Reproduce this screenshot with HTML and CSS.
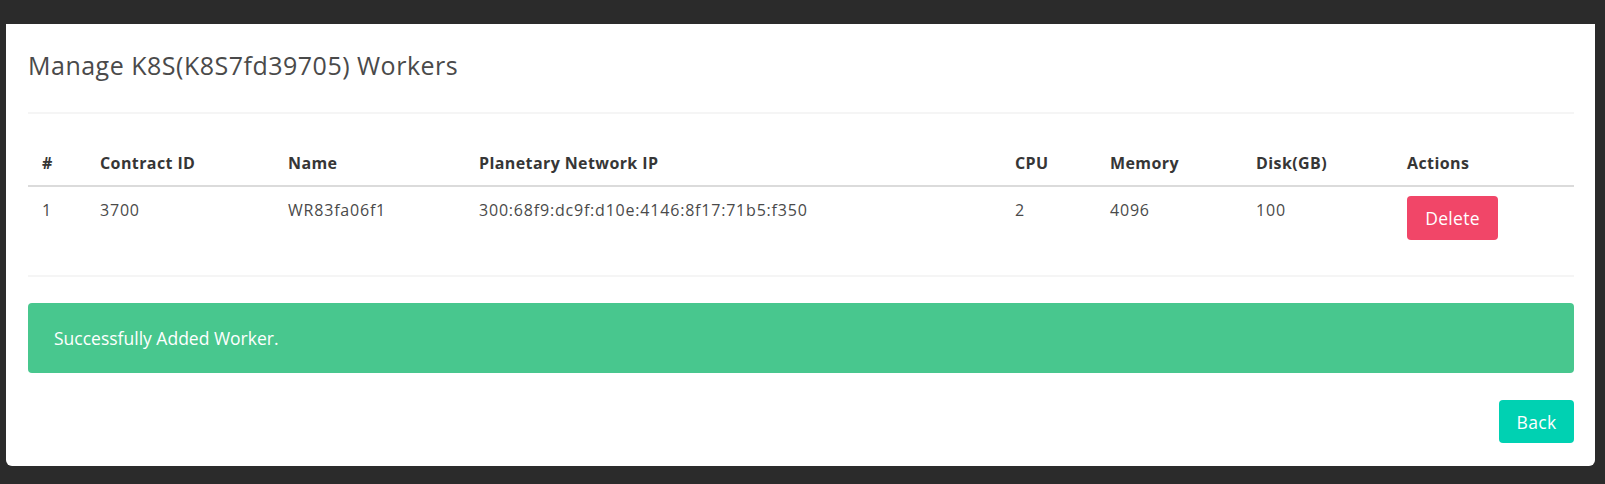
FILE: index.html
```html
<!DOCTYPE html>
<html lang="en">
<head>
<meta charset="utf-8">
<title>Manage K8S Workers</title>
<link rel="stylesheet" href="styles.css">
</head>
<body>
<div class="card">
  <header class="card-head">
    <p class="title">Manage K8S(K8S7fd39705) Workers</p>
  </header>
  <hr class="sep">
  <table class="table">
    <thead>
      <tr>
        <th class="c-num">#</th>
        <th class="c-id">Contract ID</th>
        <th class="c-name">Name</th>
        <th class="c-ip">Planetary Network IP</th>
        <th class="c-cpu">CPU</th>
        <th class="c-mem">Memory</th>
        <th class="c-disk">Disk(GB)</th>
        <th class="c-act">Actions</th>
      </tr>
    </thead>
    <tbody>
      <tr>
        <td>1</td>
        <td>3700</td>
        <td>WR83fa06f1</td>
        <td>300:68f9:dc9f:d10e:4146:8f17:71b5:f350</td>
        <td>2</td>
        <td>4096</td>
        <td>100</td>
        <td class="act"><button class="btn btn-danger">Delete</button></td>
      </tr>
    </tbody>
  </table>
  <hr class="sep sep-bottom">
  <div class="notification">Successfully Added Worker.</div>
  <footer class="card-foot">
    <button class="btn btn-primary">Back</button>
  </footer>
</div>
</body>
</html>
```

FILE: styles.css
```css
html, body {
  margin: 0;
  padding: 0;
}
body {
  background: #2b2b2b;
  font-family: "Open Sans", "Noto Sans", sans-serif;
  color: #4a4a4a;
  padding-top: 24px;
  height: 484px;
  box-sizing: border-box;
  overflow: hidden;
}
.card {
  margin-left: 6px;
  width: 1589px;
  height: 442px;
  box-sizing: border-box;
  background: #fff;
  padding: 0 21px 0 22px;
  border-radius: 0 0 6px 6px;
}
.card-head {
  padding-top: 26px;
}
.title {
  margin: 0;
  font-size: 25px;
  letter-spacing: 0.5px;
  line-height: 30px;
  color: #4a4a4a;
  font-weight: 400;
}
.sep {
  border: none;
  height: 2px;
  background: #f5f5f5;
  margin: 32px 0 0;
}
.sep-bottom {
  margin: 26px 0 26px;
}
.table {
  margin-top: 28px;
  width: 100%;
  border-collapse: collapse;
  table-layout: fixed;
}
.table th {
  box-sizing: border-box;
  text-align: left;
  color: #363636;
  font-weight: 700;
  font-size: 16px;
  letter-spacing: 0.4px;
  line-height: 24px;
  padding: 9px 12px 10px 14px;
  border-bottom: 2px solid #dbdbdb;
}
.table td {
  font-size: 16px;
  letter-spacing: 0.8px;
  line-height: 29px;
  padding: 9px 12px 9px 14px;
  vertical-align: top;
  white-space: nowrap;
}
.table td.act {
  line-height: 24px;
  letter-spacing: normal;
}
.c-num { width: 58px; }
.c-id { width: 188px; }
.c-name { width: 191px; }
.c-ip { width: 536px; }
.c-cpu { width: 95px; }
.c-mem { width: 146px; }
.c-disk { width: 151px; }
.c-act { width: auto; }
.btn {
  border: none;
  border-radius: 4px;
  color: #fff;
  font-family: inherit;
  font-size: 17.5px;
  letter-spacing: 0.3px;
  cursor: pointer;
  display: inline-block;
  padding: 0;
}
.btn-danger {
  background: #f14668;
  height: 44px;
  width: 91px;
}
.btn-primary {
  background: #00d1b2;
  height: 43px;
  width: 75px;
}
.notification {
  background: #48c78e;
  color: #fff;
  border-radius: 4px;
  font-size: 17.5px;
  line-height: 24px;
  padding: 23px 40px 23px 26px;
}
.card-foot {
  margin-top: 27px;
  display: flex;
  justify-content: flex-end;
}
```
